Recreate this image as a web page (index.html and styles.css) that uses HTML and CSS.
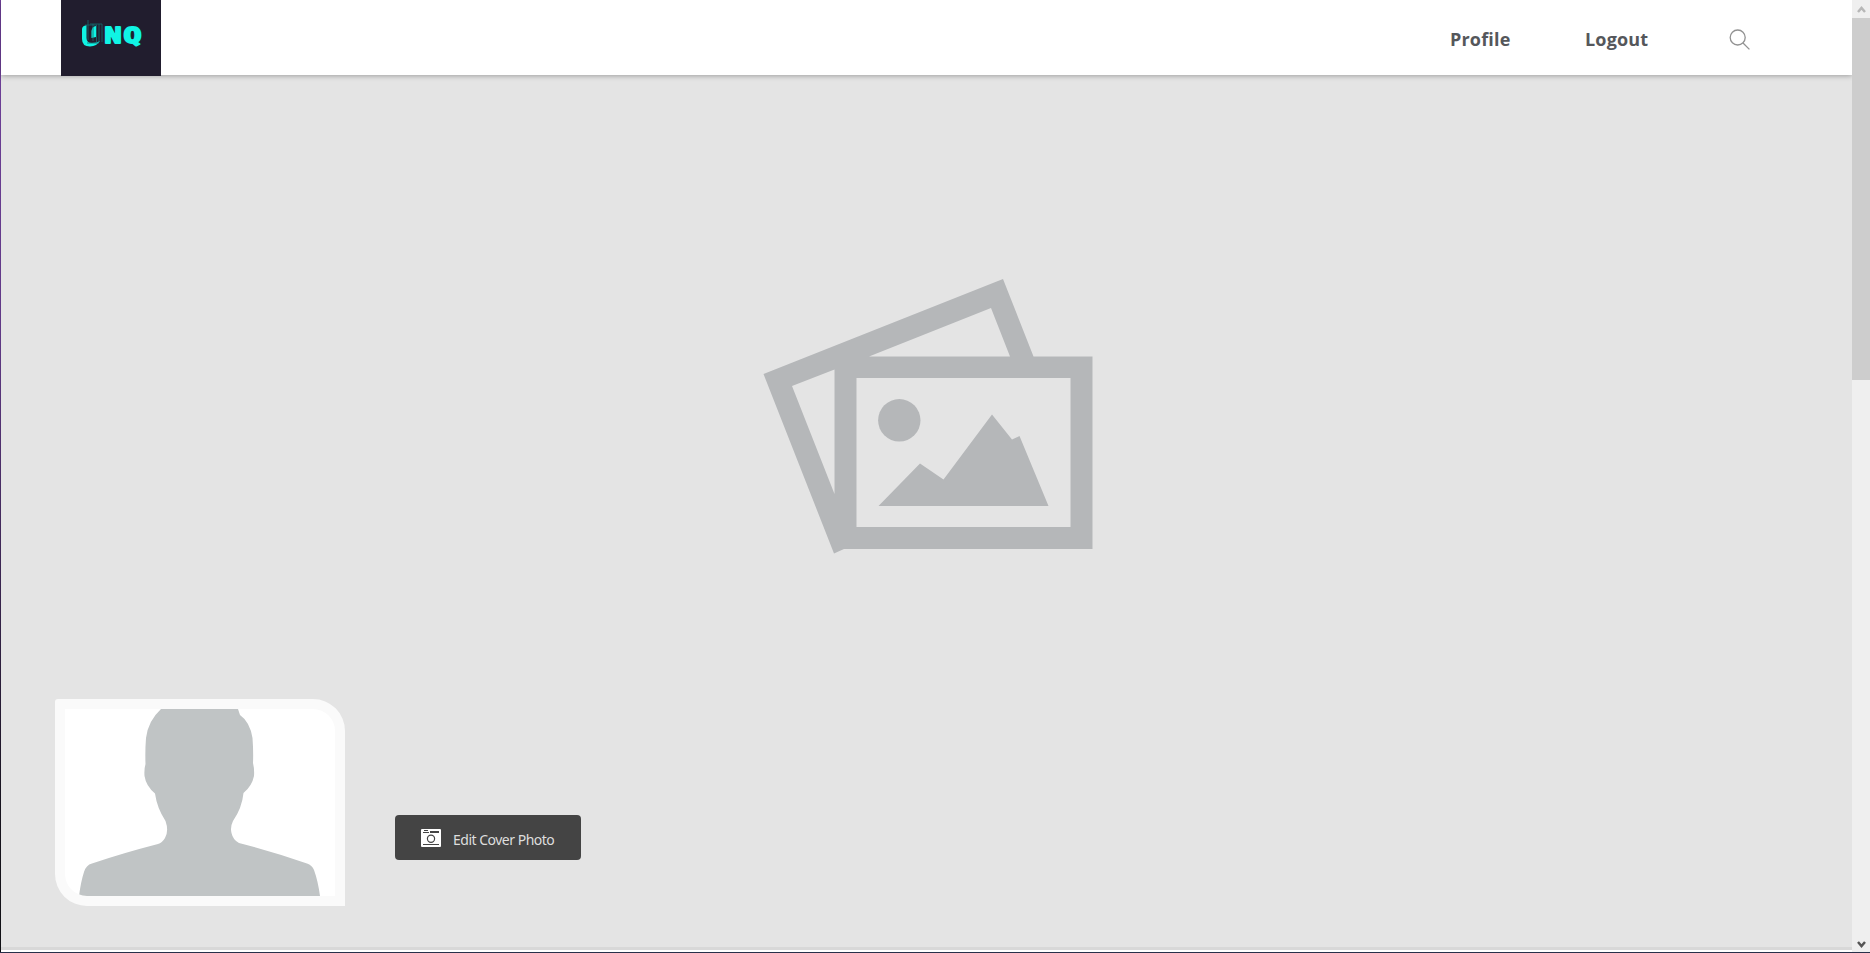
FILE: index.html
```html
<!DOCTYPE html>
<html lang="en">
<head>
<meta charset="utf-8">
<title>UNQ Profile</title>
<link rel="stylesheet" href="styles.css">
</head>
<body>
<div class="window">
  <div class="edge"></div>
  <div class="page">
    <header class="header">
      <a class="logo" aria-label="UNQ">
        <svg width="100" height="76" viewBox="0 0 100 76">
          <path class="logo-mark" d="M25.500 25Q21 26 21 29V39Q21 46.500 29 46.500Q36 46 39 41Q36 43 31 43Q25.500 43 25.500 38Z"/>
          <path class="logo-mark" d="M30.500 31Q31 26.500 35 26V37L30.500 38Z"/>
          <path class="logo-trace" d="M27 20V40M29 24H41V42M32 24V41M35.500 25V42M38 24V42M24 25H36M26 43H38"/>
          <text class="logo-text" x="43.5" y="42.500" textLength="17" lengthAdjust="spacingAndGlyphs">N</text>
          <text class="logo-text" x="62.5" y="42.500" textLength="18" lengthAdjust="spacingAndGlyphs">Q</text>
        </svg>
      </a>
      <nav class="nav">
        <a class="link profile">Profile</a>
        <a class="link logout">Logout</a>
        <svg class="search" width="22" height="22" viewBox="0 0 22 22"><circle cx="8.700" cy="8.500" r="7.500"/><path d="M14 14L20.400 20.400"/></svg>
      </nav>
    </header>
    <main class="cover">
      <svg class="placeholder" width="332" height="276" viewBox="763 279 332 276">
        <path fill-rule="evenodd" d="M763.500 374L1003 279L1033.500 356.500H1092.500V549H844L834 553.500ZM792 386L834.500 494V369.500ZM869 356.500H1010L991 308ZM856.500 378V527H1070.500V378Z"/>
        <circle cx="899.300" cy="420.300" r="21.200"/>
        <path d="M878.500 506L920 463.500L943.500 479.500L992 414.500L1012 439.500L1019.500 436L1048.500 506Z"/>
      </svg>
      <div class="profile-bar">
        <div class="avatar">
          <svg width="269" height="187" viewBox="0 0 269 187">
            <path d="M96 0Q83 12 81 29Q80 42 80.500 55Q79 60 79.500 67Q81 77 90 84.500Q92 99 100.500 112Q104 122 100 129Q97 134 93 135Q58 144 27 154.500Q21 156 19 163Q16 172 14 187H255Q253 172 249 161Q247 156 242 154.500Q209 143 174 134Q168 131 166.500 124Q165 118 168 112Q177 99 178.500 84Q187 77 189 67Q189.500 60 188 54Q188.500 42 187.500 29Q185 13 175 6L173 0Z"/>
          </svg>
        </div>
        <button class="edit">
          <svg width="20" height="18" viewBox="0 0 20 18"><rect width="20" height="18" rx="1" fill="#fff"/><path d="M3 1.500H7M2 3.500H8M2 15.500H18" stroke="#444" stroke-width="1"/><path d="M9 3H18" stroke="#444" stroke-width="2"/><circle cx="10" cy="9.700" r="3.600" fill="none" stroke="#444" stroke-width="1.200"/></svg>
          <span>Edit Cover Photo</span>
        </button>
      </div>
    </main>
    <div class="next"></div>
  </div>
  <aside class="scrollbar">
    <svg class="arrow up" width="18" height="18"><path d="M6 12L9.500 8L13 12"/></svg>
    <div class="thumb"></div>
    <svg class="arrow down" width="18" height="18"><path d="M6 8L9.500 12L13 8"/></svg>
  </aside>
</div>
</body>
</html>
```
FILE: styles.css
```css
* { box-sizing: border-box; }
body { margin: 0; overflow: hidden; font-family: "Open Sans", sans-serif; }
.window { display: flex; width: 1870px; height: 953px; border-bottom: 1px solid #28304a; background: #fff; }
.edge { width: 1px; background: linear-gradient(#70409b, #603986 35%, #17131e 85%, #101014); }
.page { display: flex; flex-direction: column; width: 1851px; }
.header { position: relative; z-index: 1; display: flex; justify-content: space-between; height: 75px; padding: 0 101px 0 60px; background: #fff; box-shadow: 0 1px 5px rgba(0, 0, 0, .3); }
.logo { width: 100px; height: 76px; background: #211d2e; }
.logo svg { display: block; }
.logo-mark { fill: #10f4e4; }
.logo-trace { fill: none; stroke: #176b70; stroke-width: .8; }
.logo-text { font: 700 22px "DejaVu Sans Mono", monospace; fill: #10f4e4; stroke: #10f4e4; stroke-width: 1.8; stroke-linejoin: round; }
.nav { display: flex; align-items: center; height: 78px; }
.link { font-size: 18px; font-weight: 700; line-height: 24px; letter-spacing: .18px; color: #55575b; white-space: nowrap; }
.profile { width: 135px; }
.logout { width: 144px; }
.search { margin-top: 2px; fill: none; stroke: #929292; stroke-width: 1.3; }
.cover { display: flex; flex-direction: column; justify-content: space-between; height: 875px; padding: 204px 54px 41px; background: #e4e4e4; border-bottom: 3px solid #d8d8d8; }
.placeholder { margin-left: 708px; fill: #b5b7b9; }
.profile-bar { display: flex; align-items: flex-end; gap: 50px; }
.avatar { width: 290px; height: 207px; background: #fff; border: 10px solid #fafafa; border-radius: 3px 32px 0 32px; overflow: hidden; }
.avatar svg { display: block; fill: #c0c4c5; }
.edit { display: flex; align-items: center; gap: 12px; width: 186px; height: 45px; margin-bottom: 46px; padding: 0 0 0 26px; border: 0; border-radius: 4px; background: #444; color: #dedede; font: 14px/20px "Noto Sans", sans-serif; letter-spacing: -.5px; white-space: nowrap; }
.edit span { padding-top: 5px; }
.next { flex: 1; background: #fff; }
.scrollbar { position: relative; z-index: 2; display: flex; flex-direction: column; width: 18px; background: #efefef; }
.thumb { height: 362px; background: #cdcdcd; }
.arrow { fill: none; stroke-width: 2.5; }
.up { stroke: #b7b7b7; }
.down { margin-top: auto; stroke: #555; }
```
